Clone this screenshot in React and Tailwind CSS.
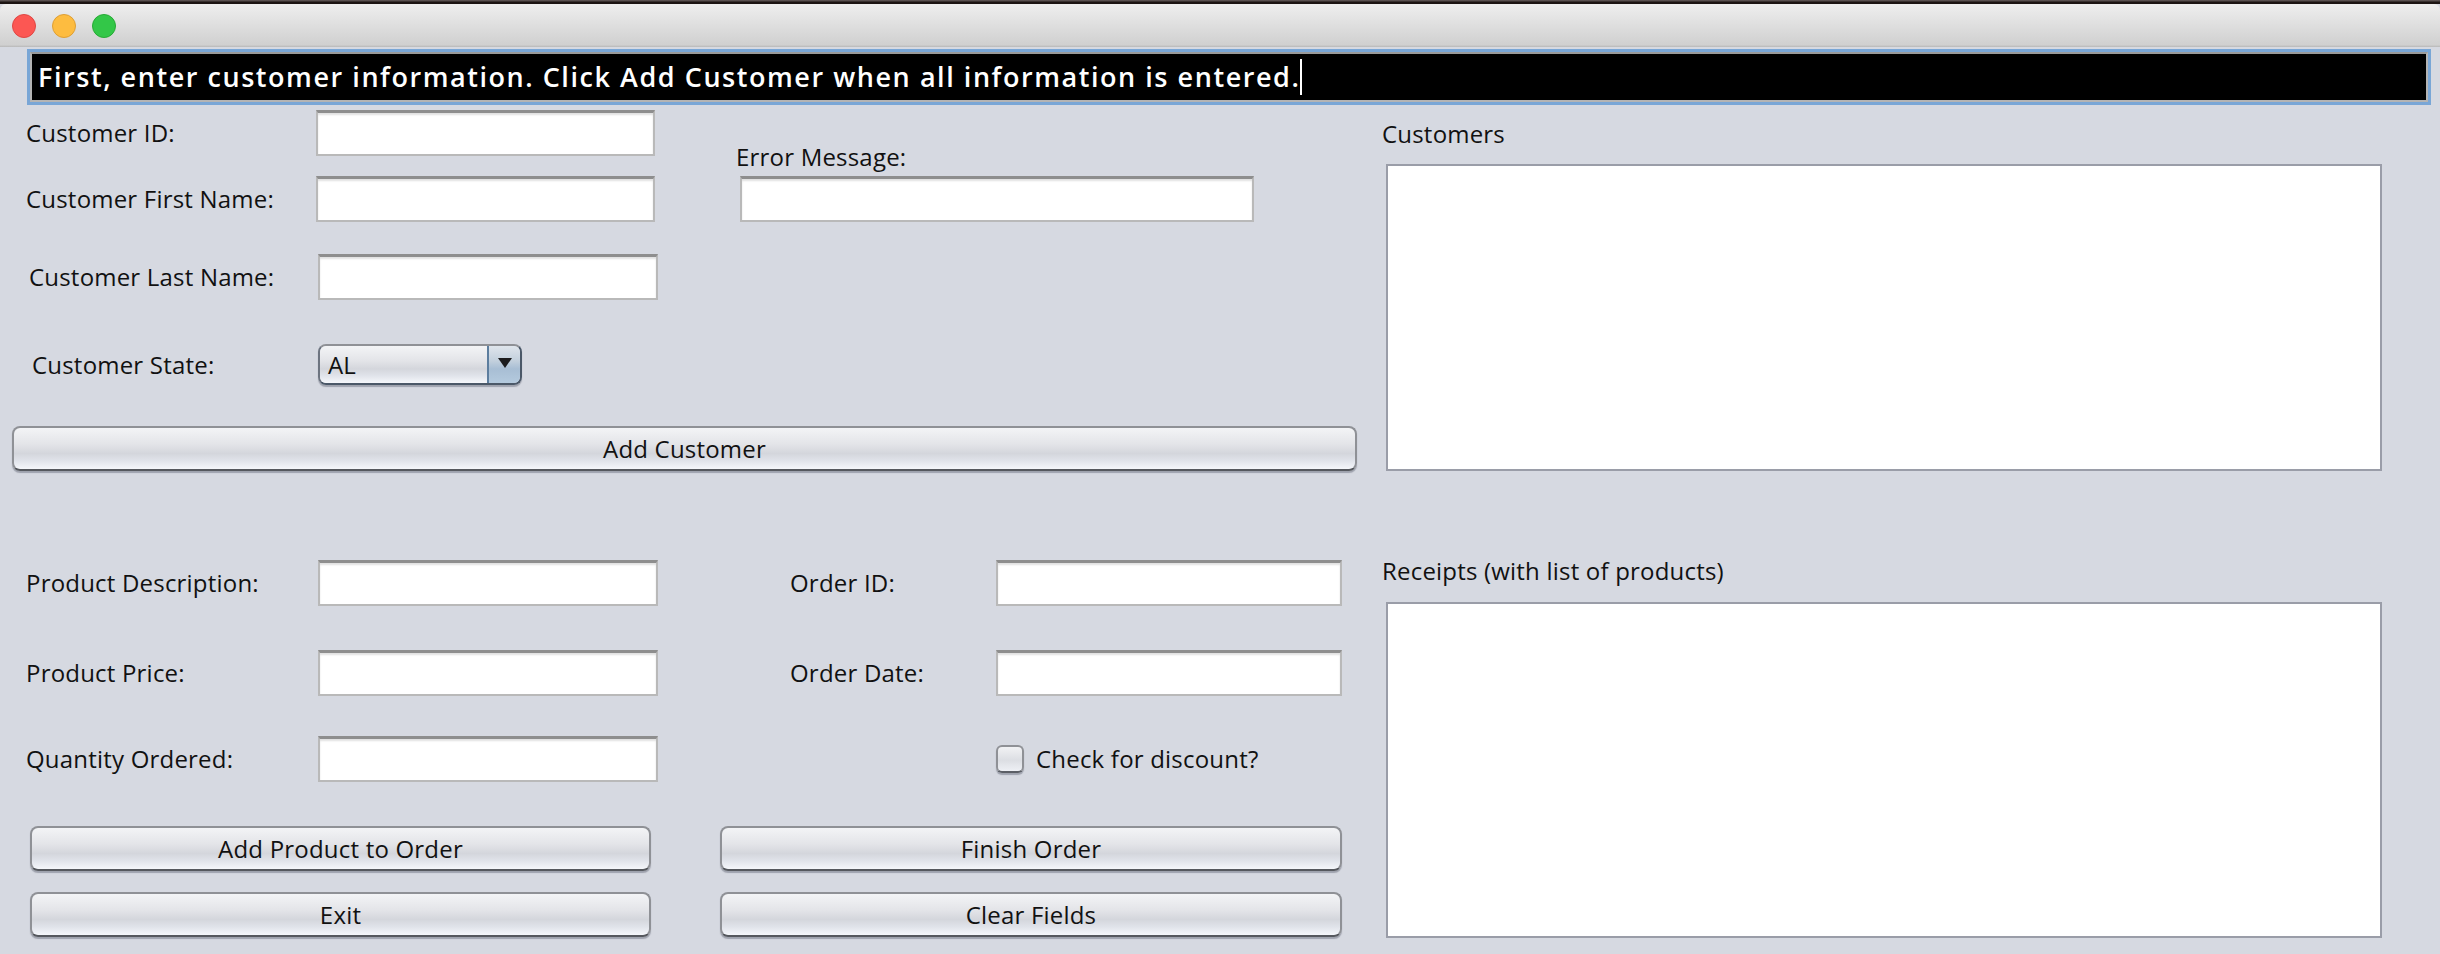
const font = "font-['Open_Sans','Liberation_Sans',sans-serif]";

function Label({ className = "", children }) {
  return (
    <span className={`-ml-[1px] mr-[1px] text-[24px] tracking-[0.2px] leading-[30px] text-[#111] whitespace-nowrap shrink-0 ${className}`}>
      {children}
    </span>
  );
}

function Input({ className = "" }) {
  return (
    <input
      type="text"
      readOnly
      className={`h-[46px] shrink-0 bg-white border-2 border-[#b9b9b9] border-t-[3px] border-t-[#8e8e8e] shadow-[inset_0_2px_2px_rgba(0,0,0,0.12)] outline-none ${className}`}
    />
  );
}

function AquaButton({ className = "", children }) {
  return (
    <button
      type="button"
      className={`h-[45px] shrink-0 rounded-[8px] border-2 border-[#8f9196] border-b-[#55585e] bg-[linear-gradient(to_bottom,#f3f4f6_0%,#e3e4e8_40%,#d4d6dc_62%,#e0e3ea_80%,#f5f7fb_100%)] shadow-[0_2px_1px_rgba(90,95,110,0.45)] text-[24px] tracking-[0.2px] leading-[30px] text-[#111] text-center ${className}`}
    >
      {children}
    </button>
  );
}

function Box({ className = "" }) {
  return <div className={`w-[996px] shrink-0 bg-white border-2 border-[#9a9da8] ${className}`} />;
}

export default function App() {
  return (
    <div className={`${font} min-h-screen w-[2440px] bg-[#d6d9e1] overflow-hidden`}>
      <div className="h-[4px] bg-[linear-gradient(to_bottom,#6a6060_0%,#1c1412_60%,#1c1412_100%)]" />
      <div className="h-[43px] flex items-center gap-[16px] pl-[12px] rounded-t-[6px] bg-[linear-gradient(to_bottom,#eeeeee_0%,#d0d0d0_95%,#b8b8b8_100%)]">
        <span className="w-[24px] h-[24px] rounded-full bg-[#fc5753] border border-[#df4744]" />
        <span className="w-[24px] h-[24px] rounded-full bg-[#fdbc40] border border-[#de9f34]" />
        <span className="w-[24px] h-[24px] rounded-full bg-[#33c748] border border-[#27aa35]" />
      </div>

      <div className="mt-[2px] ml-[27px] w-[2404px] h-[56px] border-[3px] border-[#79a6d6] bg-black">
        <div className="h-full border-[2px] border-[#b4b4b4] border-t-[#9a9a9a] flex items-center pl-[6px]">
          <span className="text-[27px] leading-[36px] font-semibold text-white whitespace-nowrap tracking-[1.55px] border-r-2 border-white">
            First, enter customer information. Click Add Customer when all information is entered.
          </span>
        </div>
      </div>

      <div className="flex">
        <div className="w-[1383px] shrink-0">
          <div className="flex">
            <div className="w-[658px] shrink-0">
              <div className="mt-[5px] flex items-center pl-[27px]">
                <Label className="w-[289px]">Customer ID:</Label>
                <Input className="w-[339px]" />
              </div>
              <div className="mt-[20px] flex items-center pl-[27px]">
                <Label className="w-[289px]">Customer First Name:</Label>
                <Input className="w-[339px]" />
              </div>
              <div className="mt-[32px] flex items-center pl-[30px]">
                <Label className="w-[288px]">Customer Last Name:</Label>
                <Input className="w-[340px]" />
              </div>
              <div className="mt-[44px] flex items-center pl-[33px]">
                <Label className="w-[285px]">Customer State:</Label>
                <div className="w-[204px] h-[41px] flex rounded-[8px] border-2 border-[#8f9196] border-l-[#6d7480] border-b-[#4b5868] border-r-[#4b5868] overflow-hidden shadow-[0_2px_1px_rgba(90,95,110,0.45)]">
                  <div className="flex-1 flex items-center pl-[8px] text-[24px] leading-[30px] text-[#111] bg-[linear-gradient(to_bottom,#f3f4f6_0%,#e3e4e8_40%,#d4d6dc_62%,#e0e3ea_80%,#f5f7fb_100%)]">
                    AL
                  </div>
                  <div className="w-[33px] flex items-center justify-center border-l-2 border-l-[#5c7d9e] bg-[linear-gradient(to_bottom,#dfe5ec_0%,#c3d0dd_40%,#a8bed4_62%,#b4cade_100%)]">
                    <svg width="14" height="10" viewBox="0 0 14 10" className="-mt-[3px]">
                      <polygon points="0,0 14,0 7,10" fill="#1c1c1e" />
                    </svg>
                  </div>
                </div>
              </div>
            </div>
            <div className="ml-[79px] pt-[37px]">
              <Label className="block">Error Message:</Label>
              <Input className="block mt-[4px] ml-[3px] w-[514px]" />
            </div>
          </div>

          <div className="mt-[41px] ml-[12px]">
            <AquaButton className="w-[1345px] block">Add Customer</AquaButton>
          </div>

          <div className="mt-[89px] flex items-center pl-[27px]">
            <Label className="w-[291px]">Product Description:</Label>
            <Input className="w-[340px]" />
            <Label className="ml-[132px] w-[205px]">Order ID:</Label>
            <Input className="w-[346px]" />
          </div>
          <div className="mt-[44px] flex items-center pl-[27px]">
            <Label className="w-[291px]">Product Price:</Label>
            <Input className="w-[340px]" />
            <Label className="ml-[132px] w-[205px]">Order Date:</Label>
            <Input className="w-[346px]" />
          </div>
          <div className="mt-[40px] flex items-center pl-[27px]">
            <Label className="w-[291px]">Quantity Ordered:</Label>
            <Input className="w-[340px]" />
            <span className="ml-[338px] w-[28px] h-[28px] rounded-[6px] border-2 border-[#8f9196] border-b-[#5b5f66] bg-[linear-gradient(to_bottom,#f1f2f4_0%,#dcdee3_55%,#eef0f5_100%)] shadow-[0_2px_1px_rgba(90,95,110,0.45)] shrink-0" />
            <Label className="ml-[12px]">Check for discount?</Label>
          </div>

          <div className="mt-[44px] flex pl-[30px]">
            <AquaButton className="w-[621px]">Add Product to Order</AquaButton>
            <AquaButton className="ml-[69px] w-[622px]">Finish Order</AquaButton>
          </div>
          <div className="mt-[21px] flex pl-[30px]">
            <AquaButton className="w-[621px]">Exit</AquaButton>
            <AquaButton className="ml-[69px] w-[622px]">Clear Fields</AquaButton>
          </div>
        </div>

        <div className="pt-[14px]">
          <Label className="block">Customers</Label>
          <Box className="mt-[15px] ml-[3px] h-[307px]" />
          <Label className="block mt-[85px]">Receipts (with list of products)</Label>
          <Box className="mt-[16px] ml-[3px] h-[336px]" />
        </div>
      </div>
    </div>
  );
}
